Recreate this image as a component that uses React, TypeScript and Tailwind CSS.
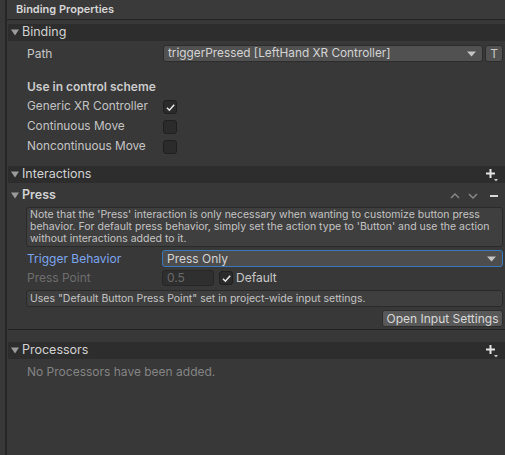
const FONT = { fontFamily: 'Inter, "Noto Sans", sans-serif' }

function Foldout() {
  return (
    <svg width="8" height="7" viewBox="0 0 8 7" className="shrink-0">
      <path d="M0 0.5 L8 0.5 L4 6.5 Z" fill="#9b9b9b" />
    </svg>
  )
}

function PlusMenu() {
  return (
    <svg width="14" height="14" viewBox="0 0 14 14">
      <path d="M5.5 1 V10 M1 5.5 H10" stroke="#e4e4e4" strokeWidth="2" />
      <path d="M9 11 H13 L11 13.5 Z" fill="#c8c8c8" />
    </svg>
  )
}

function Check() {
  return (
    <svg width="11" height="11" viewBox="0 0 11 11">
      <path d="M2 5.8 L4.4 8.2 L9.2 2.8" stroke="#e6e6e6" strokeWidth="1.6" fill="none" />
    </svg>
  )
}

function Checkbox({ checked }: { checked?: boolean }) {
  return (
    <div className="w-[14px] h-[14px] rounded-[3px] border border-[#1f1f1f] bg-[#2b2b2b] flex items-center justify-center">
      {checked && <Check />}
    </div>
  )
}

function DropArrow() {
  return (
    <svg width="9" height="6" viewBox="0 0 9 6">
      <path d="M0 0.5 H9 L4.5 5.5 Z" fill="#c4c4c4" />
    </svg>
  )
}

function SectionHeader({ title, bold, right }: { title: string; bold?: boolean; right?: React.ReactNode }) {
  return (
    <div className={`h-[17px] flex items-center pl-[3px] pr-[6px] gap-[3px] ${bold ? '' : 'bg-[#2d2d2d]'}`}>
      <Foldout />
      <span className={`text-[12.5px] text-[#d2d2d2] leading-none ${bold ? 'font-semibold' : ''}`}>{title}</span>
      <div className="ml-auto flex items-center">{right}</div>
    </div>
  )
}

export default function App() {
  return (
    <div className="w-[505px] h-[455px] bg-[#383838] flex overflow-hidden" style={FONT}>
      <div className="w-[5px] shrink-0" />
      <div className="flex-1 border-l-2 border-[#262626] flex flex-col">
        {/* title */}
        <div className="h-[20px] border-b border-[#232323] bg-[#3a3a3a] flex items-center pl-[9px]">
          <span className="text-[11px] font-semibold text-[#d6d6d6]">Binding Properties</span>
        </div>

        <div className="pl-px flex flex-col">
          <div className="h-[4px]" />
          <SectionHeader title="Binding" />

          {/* path */}
          <div className="mt-[4px] h-[17px] flex items-center">
            <span className="w-[155px] pl-[19px] text-[12px] text-[#c8c8c8]">Path</span>
            <div className="w-[320px] h-[17px] rounded-[3px] bg-[#515151] border border-[#2c2c2c] flex items-center pl-[4px] pr-[6px]">
              <span className="text-[11.8px] text-[#d4d4d4] leading-none">triggerPressed [LeftHand XR Controller]</span>
              <div className="ml-auto"><DropArrow /></div>
            </div>
            <div className="ml-[2px] w-[18px] h-[17px] rounded-[3px] bg-[#515151] border border-[#2c2c2c] flex items-center justify-center text-[12px] text-[#c8c8c8]">T</div>
          </div>

          <div className="mt-[16px] pl-[19px] h-[18px] flex items-center text-[12px] font-semibold text-[#cbcbcb]">Use in control scheme</div>

          <div className="mt-[1px] flex flex-col">
            {[
              ['Generic XR Controller', true],
              ['Continuous Move', false],
              ['Noncontinuous Move', false],
            ].map(([name, on]) => (
              <div key={name as string} className="h-[20px] flex items-center">
                <span className="w-[155px] pl-[19px] text-[11.8px] text-[#c4c4c4]">{name}</span>
                <Checkbox checked={on as boolean} />
              </div>
            ))}
          </div>

          <div className="h-[9px]" />
          <SectionHeader title="Interactions" right={<PlusMenu />} />

          <div className="h-[4px]" />
          <SectionHeader
            title="Press"
            bold
            right={
              <div className="flex items-center gap-[8px] pr-[1px]">
                <svg width="10" height="6" viewBox="0 0 10 6"><path d="M1 5 L5 1 L9 5" stroke="#8a8a8a" strokeWidth="1.4" fill="none" /></svg>
                <svg width="10" height="6" viewBox="0 0 10 6" className="mr-[4px]"><path d="M1 1 L5 5 L9 1" stroke="#8a8a8a" strokeWidth="1.4" fill="none" /></svg>
                <div className="w-[8px] h-[2px] bg-[#d8d8d8]" />
              </div>
            }
          />

          <div className="ml-[18px] mr-[2px] mt-[3px] h-[40px] rounded-[3px] border border-[#2a2a2a] bg-[#3f3f3f] px-[3px] pt-[1px] text-[10.5px] leading-[12px] text-[#c4c4c4]">
            Note that the 'Press' interaction is only necessary when wanting to customize button press behavior. For default press behavior, simply set the action type to 'Button' and use the action without interactions added to it.
          </div>

          <div className="mt-[3px] h-[17px] flex items-center">
            <span className="w-[154px] pl-[19px] text-[12px] text-[#7ca6ef]">Trigger Behavior</span>
            <div className="flex-1 mr-[2px] h-[17px] rounded-[3px] bg-[#4d4d4d] border border-[#3a79bb] flex items-center pl-[4px] pr-[6px]">
              <span className="text-[12px] text-[#d4d4d4] leading-none">Press Only</span>
              <div className="ml-auto"><DropArrow /></div>
            </div>
          </div>

          <div className="mt-[3px] h-[16px] flex items-center">
            <span className="w-[154px] pl-[19px] text-[12px] text-[#6e6e6e]">Press Point</span>
            <div className="w-[52px] h-[16px] rounded-[3px] bg-[#2f2f2f] border border-[#262626] flex items-center pl-[4px] text-[12px] text-[#6a6a6a]">0.5</div>
            <div className="ml-[5px]"><Checkbox checked /></div>
            <span className="ml-[3px] text-[12px] text-[#c8c8c8]">Default</span>
          </div>

          <div className="ml-[18px] mr-[2px] mt-[4px] h-[17px] rounded-[3px] border border-[#2a2a2a] bg-[#3f3f3f] px-[3px] flex items-center text-[10.5px] text-[#c4c4c4]">
            Uses "Default Button Press Point" set in project-wide input settings.
          </div>

          <div className="mt-[3px] flex justify-end pr-[2px]">
            <div className="w-[121px] h-[17px] rounded-[3px] bg-[#585858] border border-[#2c2c2c] flex items-center justify-center text-[12px] text-[#d8d8d8]">
              Open Input Settings
            </div>
          </div>

          <div className="mt-[2px] h-px bg-[#222222]" />
          <div className="h-[12px]" />
          <SectionHeader title="Processors" right={<PlusMenu />} />

          <div className="mt-[4px] pl-[19px] h-[17px] flex items-center text-[12px] text-[#848484]">No Processors have been added.</div>
        </div>
      </div>
    </div>
  )
}
